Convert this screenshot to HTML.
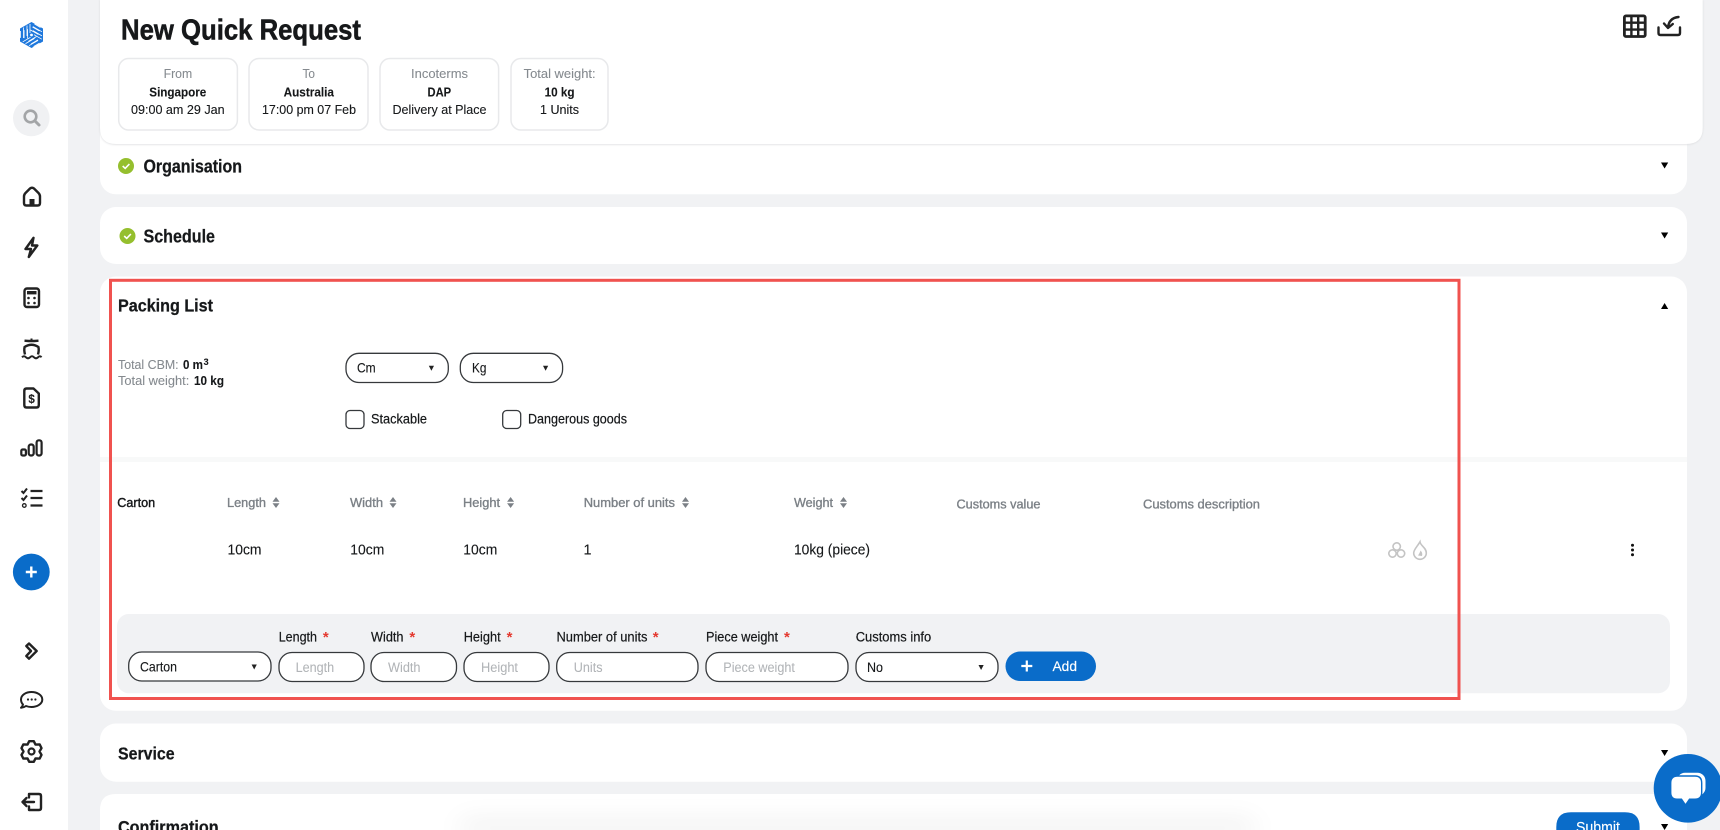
<!DOCTYPE html>
<html lang="en"><head><meta charset="utf-8"><title>New Quick Request</title>
<style>
html,body{margin:0;padding:0;width:1720px;height:830px;overflow:hidden;background:#f1f2f4}
svg{display:block}
text{font-family:"Liberation Sans",Arial,sans-serif;fill:#16181a;white-space:pre;stroke:#16181a;stroke-width:.12px}
.b{font-weight:700;stroke-width:.1px}
.hd{font-weight:700;stroke-width:.25px}
.m{stroke-width:.2px}
.g{fill:#858a8f;stroke:#858a8f;stroke-width:.08px}
.h{fill:#7b8086;stroke:#7b8086;stroke-width:.35px}
.p{fill:#b1b4b7;stroke:#b1b4b7;stroke-width:.05px}
.w{fill:#fff;stroke:#fff;stroke-width:.15px}
.i{fill:none;stroke:#222;stroke-width:2.4;stroke-linecap:round;stroke-linejoin:round}
.f{fill:#fff;stroke:#36393c;stroke-width:1.3}
.s{fill:#e4392f;stroke:none;font-weight:700}
</style></head><body>
<svg width="1720" height="830" viewBox="0 0 1720 830" xmlns="http://www.w3.org/2000/svg">
<defs>
<filter id="bl" filterUnits="userSpaceOnUse" x="380" y="760" width="960" height="110" color-interpolation-filters="sRGB"><feGaussianBlur stdDeviation="14"/></filter>
<filter id="sh" x="-2%" y="-5%" width="104%" height="112%"><feGaussianBlur stdDeviation="1"/></filter>
</defs>
<rect width="1720" height="830" fill="#f1f2f4"/>
<!-- sidebar -->
<rect width="68" height="830" fill="#fff"/>
<!-- logo -->
<g transform="translate(31.5 35)">
<polygon points="0,-13 11.5,-6.5 11.5,6.5 0,13 -11.5,6.5 -11.5,-6.5" fill="#1f78dc"/>
<g stroke="#fff" stroke-width=".8" fill="none">
<path d="M-8 -7.5V3M-4.5 -9.5V1M-1.5 -11V-2M3 -11L9 -7.5M1 -8L8 -4M-1 -5L7 -.5"/>
<path transform="rotate(120)" d="M-8 -7.5V3M-4.5 -9.5V1M-1.5 -11V-2M3 -11L9 -7.5M1 -8L8 -4M-1 -5L7 -.5"/>
<path transform="rotate(240)" d="M-8 -7.5V3M-4.5 -9.5V1M-1.5 -11V-2M3 -11L9 -7.5M1 -8L8 -4M-1 -5L7 -.5"/>
</g>
<circle r="1.4" fill="#fff"/>
</g>
<!-- search -->
<circle cx="31.3" cy="118" r="18.3" fill="#f0f1f3"/>
<circle cx="30.5" cy="116.5" r="5.8" fill="none" stroke="#a3a5a7" stroke-width="2.6"/>
<path d="M35 121L39 125" stroke="#a3a5a7" stroke-width="3" stroke-linecap="round"/>
<!-- home -->
<path class="i" d="M24 196.5Q24 194.5 25.5 193L30 188.5Q32 187 34 188.5L38.5 193Q40 194.5 40 196.5V203Q40 205.5 37.5 205.5H26.5Q24 205.5 24 203Z"/>
<rect x="29.5" y="199" width="5" height="6" fill="#222"/>
<!-- bolt -->
<path class="i" d="M33.5 237.8L25.5 249H31L28.8 257L37.3 245.5H32Z"/>
<!-- calc -->
<rect class="i" x="24.5" y="288.5" width="14.5" height="18.5" rx="2.5"/>
<rect x="27" y="291" width="9.5" height="3.4" fill="#222"/>
<g fill="#222"><circle cx="28.5" cy="298" r="1.3"/><circle cx="34.5" cy="298" r="1.3"/><circle cx="28.5" cy="303" r="1.3"/><circle cx="34.5" cy="303" r="1.3"/></g>
<!-- ship -->
<path d="M25 354.5Q23.8 350 24.6 347Q31.5 342.5 38.4 347Q39.2 350 38 354.5" fill="none" stroke="#222" stroke-width="2.4"/>
<path d="M24.5 340.7L28.5 341H34.5L38.5 340.7" fill="none" stroke="#222" stroke-width="2.4"/>
<path d="M31.5 338.5V341" stroke="#222" stroke-width="2"/>
<path d="M22 357.3Q24 355.3 26 357.3T30 357.3T34 357.3T38 357.3T41.5 357.3" fill="none" stroke="#222" stroke-width="2"/>
<!-- doc -->
<path class="i" d="M26.5 388.5H33.5L38.8 393.5V405Q38.8 407.5 36.5 407.5H26.5Q24.3 407.5 24.3 405V391Q24.3 388.5 26.5 388.5Z"/>
<text x="28.4" y="403" font-size="11.5" class="b" style="fill:#222">$</text>
<!-- bars -->
<g fill="none" stroke="#222" stroke-width="2.2">
<rect x="21.3" y="449.5" width="4.6" height="6" rx="1.4"/>
<rect x="28.7" y="444.5" width="5" height="11" rx="2.2"/>
<rect x="36.6" y="440.3" width="5" height="15.2" rx="2.2"/>
</g>
<!-- list -->
<path d="M21.5 491L23.5 493L27 488.5M21.5 498L23.5 500L27 495.5" fill="none" stroke="#222" stroke-width="2"/>
<circle cx="24.3" cy="505.5" r="1.8" fill="none" stroke="#222" stroke-width="1.3"/>
<path d="M30.5 491H42.5M30.5 498H42.5M30.5 505.5H42.5" stroke="#222" stroke-width="2.2"/>
<!-- plus -->
<circle cx="31.3" cy="572" r="18.4" fill="#0a6cc9"/>
<path d="M31.3 566.5V577.5M25.8 572H36.8" stroke="#fff" stroke-width="2.4"/>
<!-- chevron -->
<polygon class="i" points="26.3,646 29,643.5 36.7,651 29,658.7 26.3,656 31,651"/>
<!-- chat -->
<path class="i" d="M21 707.8Q22.5 706.5 23 704.5Q21 702.5 21 699.5C21 695 26 692 31.5 692S42.3 695 42.3 699.5S37 707 31.5 707Q28.5 707 26 706Q24 707.5 21 707.8Z" style="stroke-width:2"/>
<g fill="#222"><circle cx="28" cy="699.5" r="1.1"/><circle cx="31.7" cy="699.5" r="1.1"/><circle cx="35.4" cy="699.5" r="1.1"/></g>
<!-- gear -->
<g transform="translate(31.5 751.5)">
<polygon class="i" points="-2.29,-10.3 2.29,-10.3 4,-6.93 8.17,-7.1 10,-3.4 8,0 10,3.4 8.17,7.1 4,6.93 2.29,10.3 -2.29,10.3 -4,6.93 -8.17,7.1 -10,3.4 -8,0 -10,-3.4 -8.17,-7.1 -4,-6.93"/>
<circle r="3" fill="none" stroke="#222" stroke-width="2.2"/>
</g>
<!-- logout -->
<path class="i" d="M29 797.5V794H39Q41 794 41 796V808Q41 810 39 810H29V806.5"/>
<path class="i" d="M22.5 802H34M26.5 798L22.5 802L26.5 806"/>

<!-- section cards -->
<rect x="100" y="120" width="1587" height="74.3" rx="16" fill="#fff"/>
<rect x="100" y="207" width="1587" height="57" rx="16" fill="#fff"/>
<rect x="100" y="276.5" width="1587" height="434.3" rx="16" fill="#fff"/>
<rect x="100" y="723.5" width="1587" height="58.2" rx="16" fill="#fff"/>
<path d="M100 830V810Q100 794 116 794H1671Q1687 794 1687 810V830Z" fill="#fff"/>

<!-- top card -->
<path d="M100 0H1702.7V128Q1702.7 144.5 1686 144.5H116Q100 144.5 100 128Z" fill="#d8d9db" filter="url(#sh)"/>
<path d="M100 0H1702.7V128Q1702.7 144 1686 144H116Q100 144 100 128Z" fill="#fff"/>
<text x="121" y="39.5" font-size="29" class="b" style="stroke-width:.55px" textLength="240" lengthAdjust="spacingAndGlyphs">New Quick Request</text>
<g fill="#fff" stroke="#e8e9eb" stroke-width="1.5">
<rect x="118.7" y="58.5" width="118.7" height="71.5" rx="10"/>
<rect x="249" y="58.5" width="119" height="71.5" rx="10"/>
<rect x="380" y="58.5" width="118.6" height="71.5" rx="10"/>
<rect x="511" y="58.5" width="97" height="71.5" rx="10"/>
</g>
<g font-size="13">
<text class="g" x="163.6" y="78" textLength="28.6" lengthAdjust="spacingAndGlyphs">From</text>
<text class="b" x="149.3" y="96.6" textLength="57" lengthAdjust="spacingAndGlyphs">Singapore</text>
<text x="131" y="114" textLength="93.6" lengthAdjust="spacingAndGlyphs">09:00 am 29 Jan</text>
<text class="g" x="302.5" y="78" textLength="12.5" lengthAdjust="spacingAndGlyphs">To</text>
<text class="b" x="283.6" y="96.6" textLength="50.4" lengthAdjust="spacingAndGlyphs">Australia</text>
<text x="262" y="114" textLength="94" lengthAdjust="spacingAndGlyphs">17:00 pm 07 Feb</text>
<text class="g" x="411" y="78" textLength="57" lengthAdjust="spacingAndGlyphs">Incoterms</text>
<text class="b" x="427.5" y="96.6" textLength="23.6" lengthAdjust="spacingAndGlyphs">DAP</text>
<text x="392.5" y="114" textLength="94" lengthAdjust="spacingAndGlyphs">Delivery at Place</text>
<text class="g" x="523.6" y="78" textLength="72" lengthAdjust="spacingAndGlyphs">Total weight:</text>
<text class="b" x="544.6" y="96.6" textLength="30" lengthAdjust="spacingAndGlyphs">10 kg</text>
<text x="540" y="114" textLength="39" lengthAdjust="spacingAndGlyphs">1 Units</text>
</g>
<!-- grid icon -->
<g fill="none" stroke="#222">
<rect x="1624.4" y="15.9" width="20.8" height="20.6" rx="1.5" stroke-width="2.8"/>
<path d="M1631.4 15.9V36.5M1638.2 15.9V36.5M1624.4 22.7H1645.2M1624.4 29.6H1645.2" stroke-width="2.4"/>
</g>
<!-- export icon -->
<path class="i" d="M1658.5 27.5V33Q1658.5 35 1660.5 35H1678Q1680 35 1680 33V27.5"/>
<path class="i" d="M1678.5 17Q1669 18 1668 27.5M1664 23.5L1668 28L1672.8 24"/>

<!-- headings -->
<circle cx="126" cy="166" r="8" fill="#95bf2e"/>
<path d="M122.7 166L125.2 168.4L129.4 164" fill="none" stroke="#fff" stroke-width="1.6"/>
<text x="143.5" y="172.5" font-size="18" class="hd" textLength="98.5" lengthAdjust="spacingAndGlyphs">Organisation</text>
<circle cx="127.5" cy="236" r="8" fill="#95bf2e"/>
<path d="M124.2 236L126.7 238.4L130.9 234" fill="none" stroke="#fff" stroke-width="1.6"/>
<text x="143.5" y="242.3" font-size="18" class="hd" textLength="71.5" lengthAdjust="spacingAndGlyphs">Schedule</text>
<text x="118" y="311.7" font-size="17.5" class="hd" textLength="95" lengthAdjust="spacingAndGlyphs">Packing List</text>
<text x="118" y="759.3" font-size="17.5" class="hd" textLength="56.6" lengthAdjust="spacingAndGlyphs">Service</text>
<text x="118" y="833" font-size="17.5" class="hd" textLength="100.6" lengthAdjust="spacingAndGlyphs">Confirmation</text>
<!-- section arrows -->
<g fill="#000">
<polygon points="1661,162.5 1668.2,162.5 1664.6,168.5"/>
<polygon points="1661,232.5 1668.2,232.5 1664.6,238.5"/>
<polygon points="1661,309 1668.2,309 1664.6,303"/>
<polygon points="1661,750 1668.2,750 1664.6,756"/>
<polygon points="1661,824 1668.2,824 1664.6,830"/>
</g>

<!-- totals -->
<g font-size="13">
<text class="g" x="118" y="369" textLength="60.6" lengthAdjust="spacingAndGlyphs">Total CBM:</text>
<text class="b" x="183" y="369" textLength="20" lengthAdjust="spacingAndGlyphs">0 m</text>
<text class="b" x="203.6" y="365" font-size="9">3</text>
<text class="g" x="118" y="385" textLength="71.3" lengthAdjust="spacingAndGlyphs">Total weight:</text>
<text class="b" x="194" y="385" textLength="30" lengthAdjust="spacingAndGlyphs">10 kg</text>
</g>
<!-- unit selects -->
<rect class="f" x="346" y="353.3" width="102.3" height="29.2" rx="13"/>
<rect class="f" x="460.3" y="353.3" width="102.3" height="29.2" rx="13"/>
<text x="357" y="372.7" font-size="14" textLength="18.7" lengthAdjust="spacingAndGlyphs">Cm</text>
<text x="472" y="372.7" font-size="14" textLength="14.4" lengthAdjust="spacingAndGlyphs">Kg</text>
<polygon points="428.8,365.7 434,365.7 431.4,370.7" fill="#222"/>
<polygon points="543,365.7 548.2,365.7 545.6,370.7" fill="#222"/>
<!-- checkboxes -->
<rect class="f" x="346" y="410.5" width="18" height="18" rx="4"/>
<rect class="f" x="502.7" y="410.5" width="18" height="18" rx="4"/>
<text x="371" y="423.3" font-size="13.5" textLength="56" lengthAdjust="spacingAndGlyphs" class="m">Stackable</text>
<text x="528" y="423.3" font-size="13.5" textLength="99" lengthAdjust="spacingAndGlyphs" class="m">Dangerous goods</text>
<!-- divider -->
<rect x="100" y="457" width="1587" height="5" fill="#f8f9f9"/>

<!-- table header -->
<g font-size="13">
<text style="stroke-width:.4px" x="117.2" y="507" textLength="38" lengthAdjust="spacingAndGlyphs">Carton</text>
<text class="h" x="227" y="507" textLength="39" lengthAdjust="spacingAndGlyphs">Length</text>
<text class="h" x="350" y="507" textLength="33" lengthAdjust="spacingAndGlyphs">Width</text>
<text class="h" x="463" y="507" textLength="37" lengthAdjust="spacingAndGlyphs">Height</text>
<text class="h" x="583.7" y="507" textLength="91.3" lengthAdjust="spacingAndGlyphs">Number of units</text>
<text class="h" x="794" y="507" textLength="39" lengthAdjust="spacingAndGlyphs">Weight</text>
<text class="h" x="956.5" y="508.3" textLength="84" lengthAdjust="spacingAndGlyphs">Customs value</text>
<text class="h" x="1143" y="508.3" textLength="117" lengthAdjust="spacingAndGlyphs">Customs description</text>
</g>
<g fill="#7b8086">
<path d="M272.5 501.7L276 497L279.5 501.7ZM272.5 503.3L276 508L279.5 503.3Z"/>
<path d="M389.5 501.7L393 497L396.5 501.7ZM389.5 503.3L393 508L396.5 503.3Z"/>
<path d="M507.1 501.7L510.6 497L514.1 501.7ZM507.1 503.3L510.6 508L514.1 503.3Z"/>
<path d="M682 501.7L685.5 497L689 501.7ZM682 503.3L685.5 508L689 503.3Z"/>
<path d="M840 501.7L843.5 497L847 501.7ZM840 503.3L843.5 508L847 503.3Z"/>
</g>
<!-- row -->
<g font-size="14.5">
<text x="227.5" y="554.7" textLength="34" lengthAdjust="spacingAndGlyphs">10cm</text>
<text x="350.3" y="554.7" textLength="34" lengthAdjust="spacingAndGlyphs">10cm</text>
<text x="463.3" y="554.7" textLength="34" lengthAdjust="spacingAndGlyphs">10cm</text>
<text x="583.5" y="554.7">1</text>
<text x="794" y="554.7" textLength="76" lengthAdjust="spacingAndGlyphs">10kg (piece)</text>
</g>
<g fill="none" stroke="#c4c4c4" stroke-width="1.6">
<circle cx="1396.7" cy="546.5" r="3.7"/><circle cx="1392.5" cy="553.5" r="3.7"/><circle cx="1401" cy="553.5" r="3.7"/>
<path d="M1420 541.8C1420.5 546 1426.3 547.5 1426.3 553A6.3 6.3 0 0 1 1413.7 553C1413.7 549.5 1417 547 1420 541.8Z"/>
<path d="M1418 555.5Q1420 552.5 1420.5 550.5Q1423 553 1422 556Z" fill="#c4c4c4" stroke="none"/>
</g>
<g fill="#111"><circle cx="1632.5" cy="545.2" r="1.5"/><circle cx="1632.5" cy="550" r="1.5"/><circle cx="1632.5" cy="554.8" r="1.5"/></g>

<!-- form panel -->
<rect x="117" y="614" width="1553" height="79.3" rx="12" fill="#f1f2f4"/>
<g font-size="13.5">
<text class="m" x="278.7" y="641.3" textLength="38.3" lengthAdjust="spacingAndGlyphs">Length</text>
<text class="m" x="371" y="641.3" textLength="32.5" lengthAdjust="spacingAndGlyphs">Width</text>
<text class="m" x="463.7" y="641.3" textLength="37" lengthAdjust="spacingAndGlyphs">Height</text>
<text class="m" x="556.5" y="641.3" textLength="91" lengthAdjust="spacingAndGlyphs">Number of units</text>
<text class="m" x="706" y="641.3" textLength="72" lengthAdjust="spacingAndGlyphs">Piece weight</text>
<text class="m" x="855.7" y="641.3" textLength="75.5" lengthAdjust="spacingAndGlyphs">Customs info</text>
<g font-size="15">
<text class="s" x="322.9" y="642">*</text>
<text class="s" x="409.4" y="642">*</text>
<text class="s" x="506.6" y="642">*</text>
<text class="s" x="652.8" y="642">*</text>
<text class="s" x="784" y="642">*</text>
</g>
</g>
<rect class="f" x="128.7" y="652" width="142.3" height="29" rx="13"/>
<rect class="f" x="279" y="652.5" width="85" height="29" rx="13"/>
<rect class="f" x="371" y="652.5" width="85.5" height="29" rx="13"/>
<rect class="f" x="464" y="652.5" width="85" height="29" rx="13"/>
<rect class="f" x="556.7" y="652.5" width="141.3" height="29" rx="13"/>
<rect class="f" x="706" y="652.5" width="142" height="29" rx="13"/>
<rect class="f" x="856" y="652.5" width="142" height="29" rx="13"/>
<text x="140" y="671.3" font-size="14" textLength="37" lengthAdjust="spacingAndGlyphs">Carton</text>
<text x="867" y="672" font-size="14" textLength="16" lengthAdjust="spacingAndGlyphs">No</text>
<polygon points="251.6,664.5 256.8,664.5 254.2,669.5" fill="#222"/>
<polygon points="978.5,665 983.7,665 981.1,670" fill="#222"/>
<g font-size="13.5">
<text class="p" x="295.6" y="672" textLength="38.6" lengthAdjust="spacingAndGlyphs">Length</text>
<text class="p" x="388" y="672" textLength="32.5" lengthAdjust="spacingAndGlyphs">Width</text>
<text class="p" x="481" y="672" textLength="37" lengthAdjust="spacingAndGlyphs">Height</text>
<text class="p" x="573.8" y="672" textLength="28.7" lengthAdjust="spacingAndGlyphs">Units</text>
<text class="p" x="723.3" y="672" textLength="71.6" lengthAdjust="spacingAndGlyphs">Piece weight</text>
</g>
<rect x="1005.5" y="651.5" width="90.5" height="29.5" rx="14.7" fill="#0a6cc9"/>
<path d="M1026.8 660.5V671.5M1021.3 666H1032.3" stroke="#fff" stroke-width="2.2"/>
<text class="w" x="1052.5" y="671" font-size="14" textLength="24.5" lengthAdjust="spacingAndGlyphs">Add</text>

<!-- red annotation -->
<rect x="110.5" y="280.3" width="1348.5" height="418.2" fill="none" stroke="#f0524f" stroke-width="3"/>

<!-- confirmation -->
<rect x="460" y="826" width="795" height="4" fill="#000" opacity=".28" filter="url(#bl)"/>
<path d="M1556.3 830V827Q1556.3 812.3 1571 812.3H1625Q1639.6 812.3 1639.6 827V830Z" fill="#0a6cc9"/>
<text class="w" x="1576" y="832" font-size="14.5" textLength="44" lengthAdjust="spacingAndGlyphs">Submit</text>

<!-- chat widget -->
<circle cx="1688" cy="788.3" r="34.3" fill="#0a6cc9"/>
<rect x="1677" y="772.8" width="28.5" height="23" rx="8" fill="#fff"/>
<path d="M1677.5 776H1695Q1701.7 776 1701.7 783V792.5Q1701.7 799.2 1695 799.2H1689.5L1685.5 805L1681.5 799.2H1677Q1670.7 799.2 1670.7 792.5V783Q1670.7 776 1677.5 776Z" fill="#fff" stroke="#0a6cc9" stroke-width="1.4"/>
</svg>
</body></html>
